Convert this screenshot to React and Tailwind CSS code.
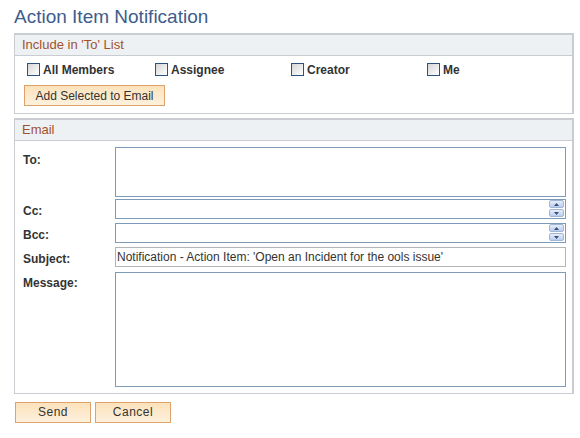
import React from 'react';

const Checkbox = ({ label, width }) => (
  <label className={`flex items-center ${width}`}>
    <span className="w-[13px] h-[13px] border border-[#2c5282] bg-gradient-to-br from-[#d6d6d6] to-[#ffffff]" />
    <span className="ml-[3px] text-[12px] font-bold text-[#333]">{label}</span>
  </label>
);

const Spinner = () => (
  <div className="flex flex-col gap-[1px] mr-[1px]">
    <span className="w-[15px] h-[8px] rounded-[2px] border border-[#9fb6d6] bg-gradient-to-b from-[#e6eefb] to-[#b9cdee] flex items-center justify-center">
      <svg width="5" height="3" viewBox="0 0 5 3"><path d="M0 3 L2.5 0 L5 3 Z" fill="#3a4f73" /></svg>
    </span>
    <span className="w-[15px] h-[8px] rounded-[2px] border border-[#9fb6d6] bg-gradient-to-b from-[#e6eefb] to-[#b9cdee] flex items-center justify-center">
      <svg width="5" height="3" viewBox="0 0 5 3"><path d="M0 0 L2.5 3 L5 0 Z" fill="#3a4f73" /></svg>
    </span>
  </div>
);

const Button = ({ children, className = '' }) => (
  <button className={`h-[21px] border border-[#dea36a] bg-gradient-to-b from-[#fce2bb] to-[#fdf1dd] text-[12px] text-[#333] ${className}`}>
    {children}
  </button>
);

const GroupHeader = ({ children }) => (
  <div className="h-[21px] bg-[#eef1f3] border-b border-[#c9cdd1] pl-[7px] text-[13px] leading-[20px] text-[#a0522d]">
    {children}
  </div>
);

const Label = ({ children, className = '' }) => (
  <div className={`text-[12px] font-bold text-[#333] ${className}`}>{children}</div>
);

export default function App() {
  return (
    <div className="w-[580px] h-[438px] bg-white pl-[14px] font-['Liberation_Sans',Arial,sans-serif]">
      <h1 className="h-[33px] pt-[5px] text-[19px] leading-[24px] text-[#3e5c8b]">Action Item Notification</h1>

      {/* Include in 'To' List */}
      <div className="w-[560px] border-2 border-[#c9cdd1] border-l border-b">
        <GroupHeader>Include in 'To' List</GroupHeader>
        <div className="pl-[12px] pt-[7px] pb-[6px]">
          <div className="flex h-[13px]">
            <Checkbox label="All Members" width="w-[128px]" />
            <Checkbox label="Assignee" width="w-[136px]" />
            <Checkbox label="Creator" width="w-[136px]" />
            <Checkbox label="Me" width="w-[120px]" />
          </div>
          <Button className="mt-[9px] -ml-[3px] w-[141px]">Add Selected to Email</Button>
        </div>
      </div>

      {/* Email */}
      <div className="mt-[4px] w-[560px] border-2 border-[#c9cdd1] border-l border-b">
        <GroupHeader>Email</GroupHeader>
        <div className="grid grid-cols-[92px_1fr] pl-[8px] pr-[6px] pt-[6px] pb-[6px]">
          <Label className="pt-[4px]">To:</Label>
          <div className="h-[50px] border border-[#7d9ab8]" />

          <Label className="mt-[2px] pt-[3px]">Cc:</Label>
          <div className="mt-[2px] h-[20px] border border-[#7d9ab8] flex items-center justify-end">
            <Spinner />
          </div>

          <Label className="mt-[3px] pt-[3px]">Bcc:</Label>
          <div className="mt-[3px] h-[20px] border border-[#7d9ab8] flex items-center justify-end">
            <Spinner />
          </div>

          <Label className="mt-[3px] pt-[3px]">Subject:</Label>
          <div className="mt-[3px] h-[20px] border border-[#b5b5b5] pl-[1px] text-[12px] leading-[18px] text-[#333]">
            Notification - Action Item: 'Open an Incident for the ools issue'
          </div>

          <Label className="mt-[4px] pt-[2px]">Message:</Label>
          <div className="mt-[4px] h-[115px] border border-[#7d9ab8]" />
        </div>
      </div>

      <div className="mt-[8px] flex gap-[4px] pl-[1px]">
        <Button className="w-[76px] tracking-[0.5px]">Send</Button>
        <Button className="w-[76px] tracking-[0.5px]">Cancel</Button>
      </div>
    </div>
  );
}
